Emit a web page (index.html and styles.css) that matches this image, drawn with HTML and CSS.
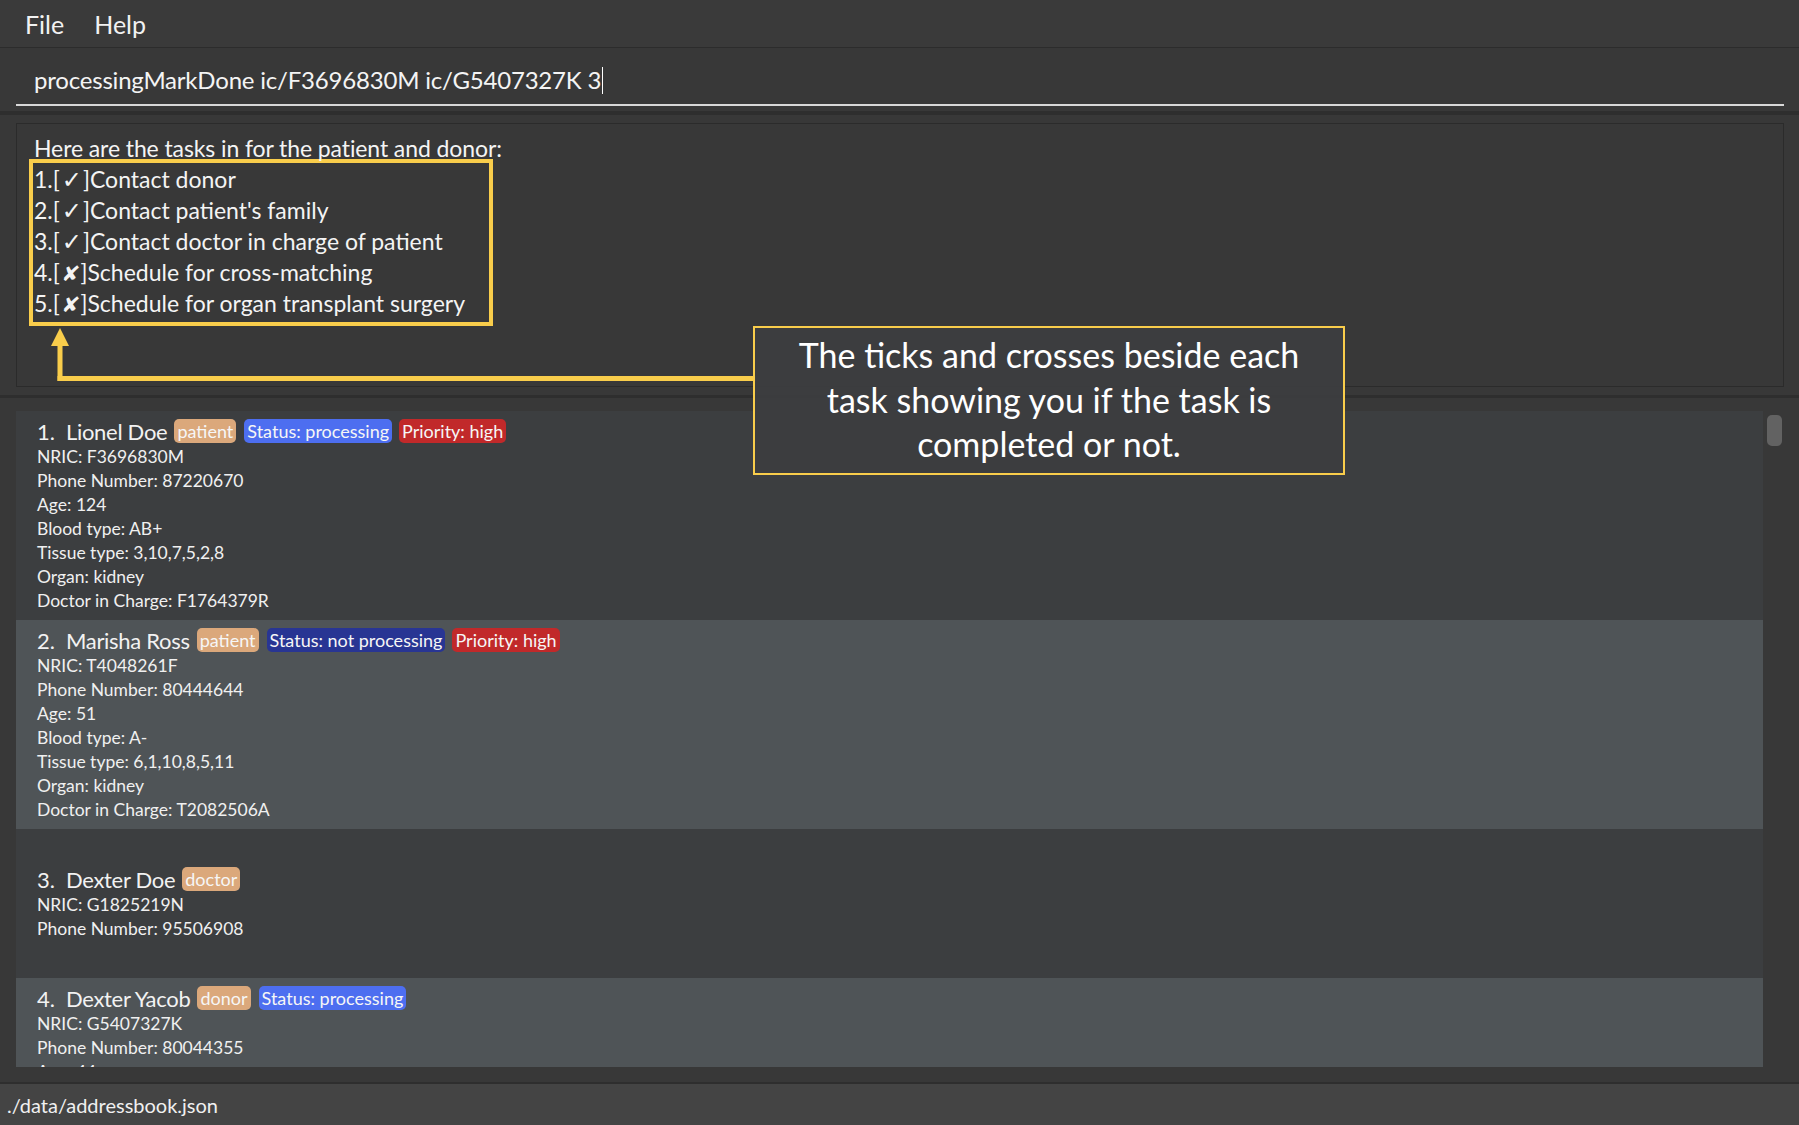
FILE: index.html
```html
<!DOCTYPE html>
<html>
<head>
<meta charset="utf-8">
<title>Address Book</title>
<link rel="stylesheet" href="styles.css">
</head>
<body>
<div class="app">
  <nav class="menubar">
    <span class="menu-item">File</span>
    <span class="menu-item">Help</span>
  </nav>
  <div class="command-bar">
    <div class="command-input">processingMarkDone ic/F3696830M ic/G5407327K 3<span class="caret"></span></div>
  </div>
  <div class="split-divider"></div>
  <div class="result-pane">
    <div class="result-box">
      <div class="result-line heading">Here are the tasks in for the patient and donor:</div>
      <div class="task-highlight">
        <div class="result-line">1.[<span class="mark tick">✓</span>]Contact donor</div>
        <div class="result-line">2.[<span class="mark tick">✓</span>]Contact patient's family</div>
        <div class="result-line">3.[<span class="mark tick">✓</span>]Contact doctor in charge of patient</div>
        <div class="result-line">4.[<span class="mark cross">✘</span>]Schedule for cross-matching</div>
        <div class="result-line">5.[<span class="mark cross">✘</span>]Schedule for organ transplant surgery</div>
      </div>
    </div>
  </div>
  <div class="split-divider thin"></div>
  <div class="list-pane">
    <div class="list">
      <div class="card odd">
        <div class="card-head"><span class="idx">1.</span><span class="name">Lionel Doe</span><span class="tag role">patient</span><span class="tag status-on">Status: processing</span><span class="tag prio">Priority: high</span></div>
        <div class="field">NRIC: F3696830M</div>
        <div class="field">Phone Number: 87220670</div>
        <div class="field">Age: 124</div>
        <div class="field">Blood type: AB+</div>
        <div class="field">Tissue type: 3,10,7,5,2,8</div>
        <div class="field">Organ: kidney</div>
        <div class="field">Doctor in Charge: F1764379R</div>
      </div>
      <div class="card even">
        <div class="card-head"><span class="idx">2.</span><span class="name">Marisha Ross</span><span class="tag role">patient</span><span class="tag status-off">Status: not processing</span><span class="tag prio">Priority: high</span></div>
        <div class="field">NRIC: T4048261F</div>
        <div class="field">Phone Number: 80444644</div>
        <div class="field">Age: 51</div>
        <div class="field">Blood type: A-</div>
        <div class="field">Tissue type: 6,1,10,8,5,11</div>
        <div class="field">Organ: kidney</div>
        <div class="field">Doctor in Charge: T2082506A</div>
      </div>
      <div class="card odd">
        <div class="card-head"><span class="idx">3.</span><span class="name">Dexter Doe</span><span class="tag role">doctor</span></div>
        <div class="field">NRIC: G1825219N</div>
        <div class="field">Phone Number: 95506908</div>
      </div>
      <div class="card even">
        <div class="card-head"><span class="idx">4.</span><span class="name">Dexter Yacob</span><span class="tag role">donor</span><span class="tag status-on">Status: processing</span></div>
        <div class="field">NRIC: G5407327K</div>
        <div class="field">Phone Number: 80044355</div>
        <div class="field">Age: 44</div>
        <div class="field">Blood type: A+</div>
        <div class="field">Tissue type: 6,1,10,8,5,11</div>
        <div class="field">Organ: kidney</div>
      </div>
    </div>
    <div class="scrollbar"><div class="thumb"></div></div>
  </div>
  <div class="status-bar">./data/addressbook.json</div>
</div>

<svg class="arrow" width="720" height="60" viewBox="0 0 720 60" aria-hidden="true">
  <polygon points="10,1 1,19 19,19" fill="#f9cd4b"/>
  <rect x="7.5" y="17" width="5" height="37" fill="#f9cd4b"/>
  <rect x="7.5" y="49" width="698" height="5" fill="#f9cd4b"/>
</svg>
<div class="callout">The ticks and crosses beside each<br>task showing you if the task is<br>completed or not.</div>
</body>
</html>
```

FILE: styles.css
```css
* { box-sizing: border-box; }
html, body { margin: 0; padding: 0; }
body {
  width: 1799px;
  height: 1125px;
  overflow: hidden;
  background: #383838;
  font-family: "Lato", "Liberation Sans", sans-serif;
  color: #ffffff;
  position: relative;
}
.app {
  display: flex;
  flex-direction: column;
  height: 1125px;
}
.menubar {
  height: 48px;
  flex: none;
  background: #3a3a3a;
  border-bottom: 1px solid #2c2c2c;
  display: flex;
  align-items: center;
  padding-left: 25px;
  gap: 30px;
}
.menu-item {
  font-size: 25px;
  color: #f2f2f2;
}
.command-bar {
  height: 63px;
  flex: none;
  background: #383838;
  padding: 8px 15px 0 16px;
}
.command-input {
  height: 50px;
  line-height: 48px;
  padding-left: 18px;
  font-size: 24px;
  color: #f4f4f4;
  border-bottom: 2px solid #d8d8d8;
  letter-spacing: -0.2px;
  white-space: nowrap;
}
.caret {
  display: inline-block;
  width: 1px;
  height: 27px;
  background: #ffffff;
  vertical-align: -5px;
  margin-left: 1px;
}
.split-divider {
  height: 4px;
  flex: none;
  background: #2e2e2e;
}
.split-divider.thin { height: 3px; }
.result-pane {
  height: 280px;
  flex: none;
  padding: 8px 15px 8px 16px;
  background: #383838;
}
.result-box {
  height: 100%;
  border: 1px solid #2b2b2b;
  padding: 9px 0 0 17px;
  background: #383838;
}
.result-line {
  font-size: 23px;
  line-height: 31px;
  height: 31px;
  color: #f4f4f4;
  white-space: nowrap;
}
.result-line.heading { letter-spacing: -0.1px; }
.mark {
  font-family: "DejaVu Sans", sans-serif;
  line-height: 0;
  display: inline-block;
}
.tick { font-size: 24px; padding: 0 1px 0 2px; }
.cross { font-size: 21px; padding: 0 1px 0 2px; transform: skewX(-8deg); }
.task-highlight {
  width: 464px;
  margin-left: -5px;
  margin-top: -5px;
  padding: 1px 0 3px 1px;
  border: 4px solid #f9cd4b;
}
.list-pane {
  flex: 1;
  min-height: 0;
  display: flex;
  background: #383838;
  padding: 13px 0 15px 16px;
}
.list {
  flex: 1;
  overflow: hidden;
  display: flex;
  flex-direction: column;
}
.card {
  flex: none;
  min-height: 149px;
  display: flex;
  flex-direction: column;
  justify-content: center;
  padding: 6px 0 7px 21px;
}
.card.odd { background: #3c3e40; }
.card.even { background: #4f5457; }
.card-head {
  display: flex;
  align-items: center;
  height: 28px;
  gap: 7px;
}
.idx {
  font-size: 22px;
  margin-right: 4px;
  color: #f2f2f2;
}
.name {
  font-size: 22px;
  color: #f2f2f2;
  letter-spacing: -0.3px;
}
.tag {
  height: 24px;
  line-height: 24px;
  padding: 0 3px;
  border-radius: 5px;
  font-size: 18px;
  color: #f6f6f6;
}
.tag.role { background: #dba87b; margin-right: 1px; }
.tag.status-on { background: #4d6ef0; }
.tag.status-off { background: #283593; }
.tag.prio { background: #c1292a; }
.field {
  font-size: 17.5px;
  line-height: 24px;
  color: #f0f0f0;
}
.scrollbar {
  width: 36px;
  flex: none;
  padding: 4px 0 0 4px;
}
.thumb {
  width: 15px;
  height: 31px;
  border-radius: 5px;
  background: #626262;
}
.status-bar {
  height: 43px;
  flex: none;
  background: #444444;
  border-top: 2px solid #2e2e2e;
  padding-left: 7px;
  display: flex;
  align-items: center;
  font-size: 20px;
  color: #f0f0f0;
}
.arrow {
  position: absolute;
  left: 50px;
  top: 327px;
}
.callout {
  position: absolute;
  left: 753px;
  top: 326px;
  width: 592px;
  height: 149px;
  border: 2px solid #f9cd4b;
  background: rgba(60, 61, 64, 0.96);
  color: #ffffff;
  font-family: "Lato", "Open Sans", sans-serif;
  font-size: 34px;
  line-height: 44.5px;
  text-align: center;
  padding-top: 5px;
}
```
